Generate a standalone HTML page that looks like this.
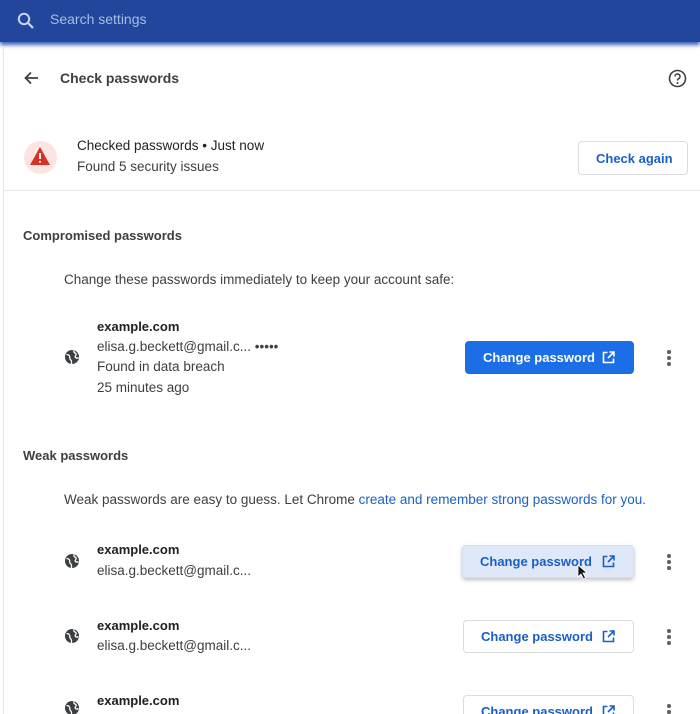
<!DOCTYPE html>
<html><head><style>
*{margin:0;padding:0;box-sizing:border-box}
html,body{width:700px;height:714px;overflow:hidden}
body{background:#fff;font-family:"Liberation Sans",sans-serif;color:#202124;position:relative}
.a{position:absolute;white-space:nowrap}
.t{font-size:13.5px;color:#3c4043}
.m{font-weight:bold;color:#202124;font-size:13px}
.btn{position:absolute;border:1px solid #dadce0;border-radius:4px;color:#1a5fc8;font-weight:bold;font-size:13px;display:flex;align-items:center;padding-left:17px;background:#fff}
.btn svg{position:absolute;right:18px}
.keb{position:absolute;width:4px}
.keb i{display:block;width:3.5px;height:3.5px;border-radius:50%;background:#5f6368;margin-bottom:2.5px}
</style></head><body>
<div class="a" style="left:0;top:0;width:700px;height:42px;background:#22469c;box-shadow:0 3px 4px #3a62b8"></div>
<svg class="a" style="left:16px;top:11px" width="20" height="20" viewBox="0 0 20 20"><circle cx="8" cy="8" r="5.2" stroke="#c9d6f2" stroke-width="2" fill="none"/><path d="M12 12l5 5" stroke="#c9d6f2" stroke-width="2.2"/></svg>
<div class="a" style="left:50px;top:11px;font-size:14px;color:#a9bce6">Search settings</div>
<div class="a" style="left:3px;top:48px;width:1px;height:666px;background:#e6e6e6"></div>
<svg class="a" style="left:23px;top:70px" width="17" height="16" viewBox="0 0 17 16"><path d="M15 8H3M8 2.5L2.5 8 8 13.5" stroke="#3c4043" stroke-width="1.8" fill="none"/></svg>
<div class="a m" style="left:60px;top:70px;font-size:14px;color:#3c4043">Check passwords</div>
<svg class="a" style="left:668px;top:69px" width="19" height="19" viewBox="0 0 19 19"><circle cx="9.5" cy="9.5" r="8" stroke="#3c4043" stroke-width="1.6" fill="none"/><path d="M7 7.5a2.5 2.5 0 1 1 3.5 2.3c-.8.4-1 .9-1 1.7" stroke="#3c4043" stroke-width="1.5" fill="none"/><circle cx="9.5" cy="14" r="1" fill="#3c4043"/></svg>
<div class="a" style="left:24px;top:141px;width:33px;height:33px;border-radius:50%;background:#fbe4e2"></div>
<svg class="a" style="left:29px;top:146px" width="22" height="20" viewBox="0 0 22 20"><path d="M11 1L21 19H1z" fill="#d93025"/><path d="M11 7v6" stroke="#fff" stroke-width="2"/><circle cx="11" cy="15.8" r="1.1" fill="#fff"/></svg>
<div class="a t" style="left:77px;top:138px;color:#202124">Checked passwords • Just now</div>
<div class="a t" style="left:77px;top:159px">Found 5 security issues</div>
<div class="btn" style="left:578px;top:141px;width:110px;height:34px">Check again</div>
<div class="a" style="left:4px;top:190px;width:696px;height:1px;background:#e8e8e8"></div>
<div class="a m" style="left:23px;top:228px;color:#3c4043">Compromised passwords</div>
<div class="a t" style="left:64px;top:272px">Change these passwords immediately to keep your account safe:</div>
<svg class="a" style="left:64px;top:349px" width="16" height="16" viewBox="0 0 16 16"><circle cx="8" cy="8" r="7" fill="#3c4043"/><path d="M2.5 5.5c1.5 0 2.5.5 3 1.5s0 2 .5 3 1.5 1 1.5 2.5V15M10 1.5c-.5 1 0 2 1 2.5s1.5 1 1 2-1.5 1.5-.5 2.5 2.5.5 3 0" stroke="#fff" stroke-width="1.3" fill="none"/></svg>
<div class="a m" style="left:97px;top:319px">example.com</div>
<div class="a t" style="left:97px;top:339px">elisa.g.beckett@gmail.c... •••••</div>
<div class="a t" style="left:97px;top:359px">Found in data breach</div>
<div class="a t" style="left:97px;top:380px">25 minutes ago</div>
<div class="btn" style="left:465px;top:341px;width:169px;height:33px;background:#1b6ee5;border-color:#1b6ee5;color:#fff">Change password<svg width="13" height="13" viewBox="0 0 13 13"><path d="M5.5 1.5H1.5v10h10V7.5M7.5 1h4.5v4.5M12 1L6 7" stroke="#fff" stroke-width="1.6" fill="none"/></svg></div>
<div class="keb" style="left:667px;top:350px"><i></i><i></i><i></i></div>
<div class="a m" style="left:23px;top:448px;color:#3c4043">Weak passwords</div>
<div class="a t" style="left:64px;top:492px">Weak passwords are easy to guess. Let Chrome <span style="color:#1a5fc8">create and remember strong passwords for you.</span></div>

<svg class="a" style="left:64px;top:553px" width="16" height="16" viewBox="0 0 16 16"><circle cx="8" cy="8" r="7" fill="#3c4043"/><path d="M2.5 5.5c1.5 0 2.5.5 3 1.5s0 2 .5 3 1.5 1 1.5 2.5V15M10 1.5c-.5 1 0 2 1 2.5s1.5 1 1 2-1.5 1.5-.5 2.5 2.5.5 3 0" stroke="#fff" stroke-width="1.3" fill="none"/></svg>
<div class="a m" style="left:97px;top:542px">example.com</div>
<div class="a t" style="left:97px;top:563px">elisa.g.beckett@gmail.c...</div>
<div class="btn" style="left:462px;top:545px;width:172px;height:33px;background:#dfe8f8;border-color:#d5dff2;box-shadow:0 2px 4px rgba(0,0,0,.25)">Change password<svg width="13" height="13" viewBox="0 0 13 13"><path d="M5.5 1.5H1.5v10h10V7.5M7.5 1h4.5v4.5M12 1L6 7" stroke="#1a5fc8" stroke-width="1.6" fill="none"/></svg></div>
<svg class="a" style="left:577px;top:564px" width="11" height="16" viewBox="0 0 11 16"><path d="M1 1v12l3-3 2.5 5 2-1-2.5-5h4z" fill="#111" stroke="#fff" stroke-width=".8"/></svg>
<div class="keb" style="left:667px;top:554px"><i></i><i></i><i></i></div>

<svg class="a" style="left:64px;top:628px" width="16" height="16" viewBox="0 0 16 16"><circle cx="8" cy="8" r="7" fill="#3c4043"/><path d="M2.5 5.5c1.5 0 2.5.5 3 1.5s0 2 .5 3 1.5 1 1.5 2.5V15M10 1.5c-.5 1 0 2 1 2.5s1.5 1 1 2-1.5 1.5-.5 2.5 2.5.5 3 0" stroke="#fff" stroke-width="1.3" fill="none"/></svg>
<div class="a m" style="left:97px;top:618px">example.com</div>
<div class="a t" style="left:97px;top:638px">elisa.g.beckett@gmail.c...</div>
<div class="btn" style="left:463px;top:620px;width:171px;height:33px">Change password<svg width="13" height="13" viewBox="0 0 13 13"><path d="M5.5 1.5H1.5v10h10V7.5M7.5 1h4.5v4.5M12 1L6 7" stroke="#1a5fc8" stroke-width="1.6" fill="none"/></svg></div>
<div class="keb" style="left:667px;top:629px"><i></i><i></i><i></i></div>

<svg class="a" style="left:64px;top:700px" width="16" height="16" viewBox="0 0 16 16"><circle cx="8" cy="8" r="7" fill="#3c4043"/><path d="M2.5 5.5c1.5 0 2.5.5 3 1.5s0 2 .5 3 1.5 1 1.5 2.5V15M10 1.5c-.5 1 0 2 1 2.5s1.5 1 1 2-1.5 1.5-.5 2.5 2.5.5 3 0" stroke="#fff" stroke-width="1.3" fill="none"/></svg>
<div class="a m" style="left:97px;top:693px">example.com</div>
<div class="btn" style="left:463px;top:695px;width:171px;height:33px">Change password<svg width="13" height="13" viewBox="0 0 13 13"><path d="M5.5 1.5H1.5v10h10V7.5M7.5 1h4.5v4.5M12 1L6 7" stroke="#1a5fc8" stroke-width="1.6" fill="none"/></svg></div>
<div class="keb" style="left:667px;top:704px"><i></i><i></i><i></i></div>
</body></html>
